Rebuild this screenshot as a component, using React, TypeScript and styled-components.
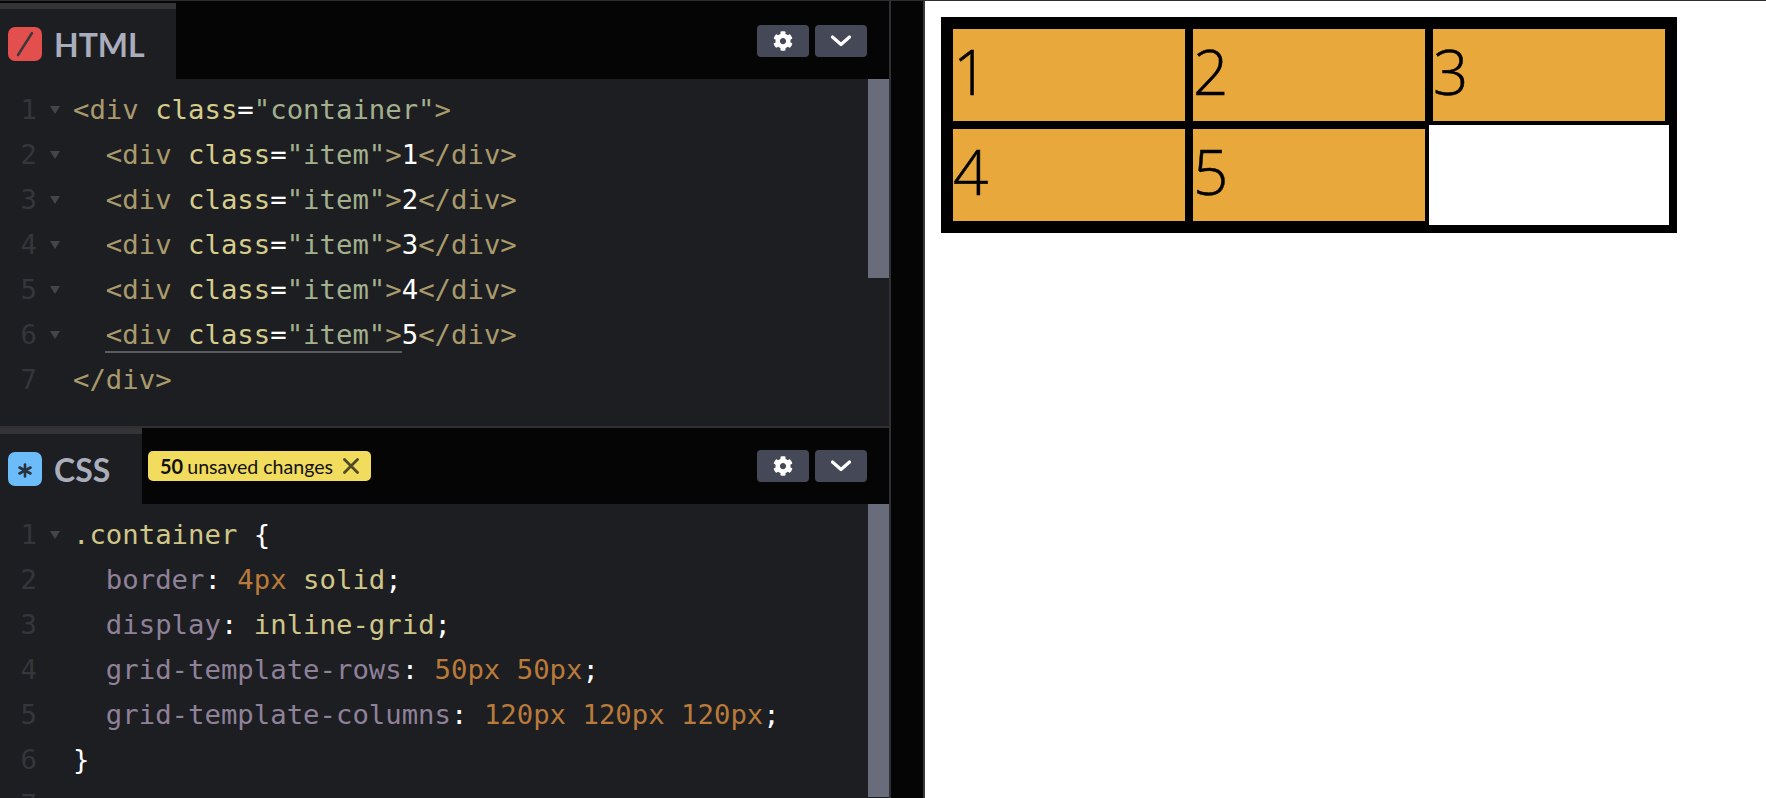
import styled, { createGlobalStyle } from "styled-components";
import { FaCog } from "react-icons/fa";

type Kind = "tag" | "attr" | "str" | "plain" | "prop" | "num" | "val";
type Tok = [Kind, string];

const colors: Record<Kind, string> = {
  tag: "#a99a6c",
  attr: "#d6cc8b",
  str: "#a3b08e",
  plain: "#ffffff",
  prop: "#8f8199",
  num: "#b97a3a",
  val: "#d0c688",
};

const itemLine = (n: string): Tok[] => [
  ["tag", "  <div "],
  ["attr", "class"],
  ["plain", "="],
  ["str", '"item"'],
  ["tag", ">"],
  ["plain", n],
  ["tag", "</div>"],
];

const htmlLines: Tok[][] = [
  [
    ["tag", "<div "],
    ["attr", "class"],
    ["plain", "="],
    ["str", '"container"'],
    ["tag", ">"],
  ],
  itemLine("1"),
  itemLine("2"),
  itemLine("3"),
  itemLine("4"),
  itemLine("5"),
  [["tag", "</div>"]],
];

const cssLines: Tok[][] = [
  [
    ["val", ".container "],
    ["plain", "{"],
  ],
  [
    ["prop", "  border"],
    ["plain", ": "],
    ["num", "4px "],
    ["val", "solid"],
    ["plain", ";"],
  ],
  [
    ["prop", "  display"],
    ["plain", ": "],
    ["val", "inline-grid"],
    ["plain", ";"],
  ],
  [
    ["prop", "  grid-template-rows"],
    ["plain", ": "],
    ["num", "50px 50px"],
    ["plain", ";"],
  ],
  [
    ["prop", "  grid-template-columns"],
    ["plain", ": "],
    ["num", "120px 120px 120px"],
    ["plain", ";"],
  ],
  [["plain", "}"]],
  [],
];

function Code({
  lines,
  folds,
  thumb,
  underline,
}: {
  lines: Tok[][];
  folds: number[];
  thumb: number;
  underline?: number;
}) {
  return (
    <CodeArea>
      <Lines>
        {lines.map((line, i) => (
          <Line key={i}>
            <LineNo>{i + 1}</LineNo>
            <Fold>{folds.includes(i) && <FoldMark />}</Fold>
            <Text $underline={underline === i}>
              {line.map(([kind, text], j) => (
                <Token key={j} $kind={kind}>
                  {text}
                </Token>
              ))}
            </Text>
          </Line>
        ))}
      </Lines>
      <ScrollTrack>
        <ScrollThumb style={{ height: thumb }} />
      </ScrollTrack>
    </CodeArea>
  );
}

function Controls() {
  return (
    <HeaderButtons>
      <IconButton>
        <FaCog size={20} color="#fff" />
      </IconButton>
      <IconButton>
        <svg width="20" height="12" viewBox="0 0 20 12">
          <polyline
            points="1.5,2 10,9.5 18.5,2"
            fill="none"
            stroke="#fff"
            strokeWidth="3.2"
            strokeLinecap="round"
            strokeLinejoin="round"
          />
        </svg>
      </IconButton>
    </HeaderButtons>
  );
}

function App() {
  return (
    <Page>
      <GlobalStyle />
      <Editors>
        <Pane $height={426}>
          <Header $first>
            <Tab $width={176}>
              <Badge $bg="#e24f4d">
                <svg width="34" height="34" viewBox="0 0 34 34">
                  <line x1="10" y1="28" x2="24" y2="6" stroke="#38393d" strokeWidth="2.4" strokeLinecap="round" />
                </svg>
              </Badge>
              <TabTitle>HTML</TabTitle>
            </Tab>
            <Controls />
          </Header>
          <Code lines={htmlLines} folds={[0, 1, 2, 3, 4, 5]} thumb={199} underline={5} />
        </Pane>
        <PaneDivider />
        <Pane $grow>
          <Header>
            <Tab $width={142}>
              <Badge $bg="#6cbcfa">
                <svg width="34" height="34" viewBox="0 0 34 34">
                  <g stroke="#27323d" strokeWidth="2.6" strokeLinecap="round">
                    <line x1="17" y1="12.5" x2="17" y2="24.5" />
                    <line x1="11.5" y1="15.5" x2="22.5" y2="21.5" />
                    <line x1="22.5" y1="15.5" x2="11.5" y2="21.5" />
                  </g>
                </svg>
              </Badge>
              <TabTitle>CSS</TabTitle>
            </Tab>
            <Unsaved>
              <strong>50</strong>
              <span>unsaved changes</span>
              <svg width="16" height="16" viewBox="0 0 16 16">
                <path d="M1.5 1.5 L14.5 14.5 M14.5 1.5 L1.5 14.5" stroke="#4d4a26" strokeWidth="2.8" strokeLinecap="round" />
              </svg>
            </Unsaved>
            <Controls />
          </Header>
          <Code lines={cssLines} folds={[0]} thumb={293} />
        </Pane>
      </Editors>
      <Gutter />
      <Preview>
        <Grid>
          {["1", "2", "3", "4", "5"].map((n) => (
            <Cell key={n}>
              <Item>{n}</Item>
            </Cell>
          ))}
        </Grid>
      </Preview>
    </Page>
  );
}

const GlobalStyle = createGlobalStyle`
  html, body {
    margin: 0;
    padding: 0;
    overflow: hidden;
    background: #fff;
  }
`;

const Page = styled.div`
  display: flex;
  width: 1766px;
  height: 798px;
  overflow: hidden;
  border-top: 1px solid #2f2f31;
  box-sizing: border-box;
`;

const Editors = styled.div`
  display: flex;
  flex-direction: column;
  width: 889px;
  flex: none;
`;

const Pane = styled.section<{ $height?: number; $grow?: boolean }>`
  display: flex;
  flex-direction: column;
  min-height: 0;
  overflow: hidden;
  flex: ${(p) => (p.$grow ? "1" : "none")};
  height: ${(p) => (p.$height ? `${p.$height - 1}px` : "auto")};
  background: #1d1e22;
`;

const PaneDivider = styled.div`
  height: 2px;
  flex: none;
  background: #2f3034;
`;

const Header = styled.header<{ $first?: boolean }>`
  display: flex;
  align-items: center;
  box-sizing: border-box;
  height: ${(p) => (p.$first ? 78 : 76)}px;
  padding-top: ${(p) => (p.$first ? 2 : 0)}px;
  flex: none;
  background: #050505;
`;

const Tab = styled.div<{ $width: number }>`
  display: flex;
  align-items: center;
  gap: 12px;
  align-self: stretch;
  box-sizing: border-box;
  width: ${(p) => p.$width}px;
  padding-left: 8px;
  border-top: 6px solid #343436;
  background: #1d1e22;
`;

const Badge = styled.div<{ $bg: string }>`
  width: 34px;
  height: 34px;
  flex: none;
  border-radius: 7px;
  background: ${(p) => p.$bg};
  svg {
    display: block;
  }
`;

const TabTitle = styled.h2`
  margin: 0;
  font: 700 32px "Lato", "Liberation Sans", sans-serif;
  color: #aaaebc;
`;

const Unsaved = styled.div`
  display: flex;
  align-items: center;
  height: 30px;
  box-sizing: border-box;
  margin-left: 6px;
  padding: 0 12px;
  border-radius: 5px;
  background: #f2dc5d;
  font: 400 19.6px "Lato", "Liberation Sans", sans-serif;
  color: #111;
  strong {
    font-size: 20px;
    font-weight: 700;
    margin-right: 4px;
  }
  svg {
    margin-left: 10px;
  }
`;

const HeaderButtons = styled.div`
  display: flex;
  gap: 6px;
  margin-left: auto;
  margin-right: 22px;
`;

const IconButton = styled.div`
  display: flex;
  align-items: center;
  justify-content: center;
  width: 52px;
  height: 32px;
  border-radius: 4px;
  background: #444857;
`;

const CodeArea = styled.div`
  display: flex;
  flex: 1;
  min-height: 0;
  overflow: hidden;
`;

const Lines = styled.div`
  flex: 1;
  padding-top: 8px;
  font: 400 27.3px "DejaVu Sans Mono", "Liberation Mono", monospace;
`;

const Line = styled.div`
  display: flex;
  align-items: center;
  height: 45px;
  white-space: pre;
`;

const LineNo = styled.span`
  width: 37px;
  flex: none;
  text-align: right;
  color: #34363c;
`;

const Fold = styled.span`
  display: flex;
  justify-content: center;
  width: 36px;
  flex: none;
`;

const FoldMark = styled.i`
  width: 0;
  height: 0;
  border-left: 5px solid transparent;
  border-right: 5px solid transparent;
  border-top: 8px solid #43454b;
`;

const Text = styled.span<{ $underline: boolean }>`
  display: inline-block;
  position: relative;
  ${(p) =>
    p.$underline &&
    `&::after {
      content: "";
      position: absolute;
      left: 32px;
      width: 297px;
      bottom: -3px;
      height: 2px;
      background: #5a5c60;
    }`}
`;

const Token = styled.span<{ $kind: Kind }>`
  color: ${(p) => colors[p.$kind]};
`;

const ScrollTrack = styled.div`
  width: 21px;
  flex: none;
`;

const ScrollThumb = styled.div`
  background: #696c7b;
`;

const Gutter = styled.div`
  width: 36px;
  flex: none;
  box-sizing: border-box;
  border-left: 2px solid #2f3034;
  border-right: 2px solid #3a3a3c;
  background: #050505;
`;

const Preview = styled.main`
  flex: 1;
  padding: 16px;
  background: #fff;
`;

const Grid = styled.div`
  display: inline-grid;
  grid-template-rows: 100px 100px;
  grid-template-columns: 240px 240px 240px;
  border: 8px solid #000;
`;

const Cell = styled.div`
  border: 4px solid #000;
  background: #000;
`;

const Item = styled.div`
  height: 100%;
  background: #e8a83c;
  color: #000;
  font: 300 62px/84px "Open Sans", "Liberation Sans", sans-serif;
  -webkit-text-stroke: 0.5px #000;
`;

export default App;
